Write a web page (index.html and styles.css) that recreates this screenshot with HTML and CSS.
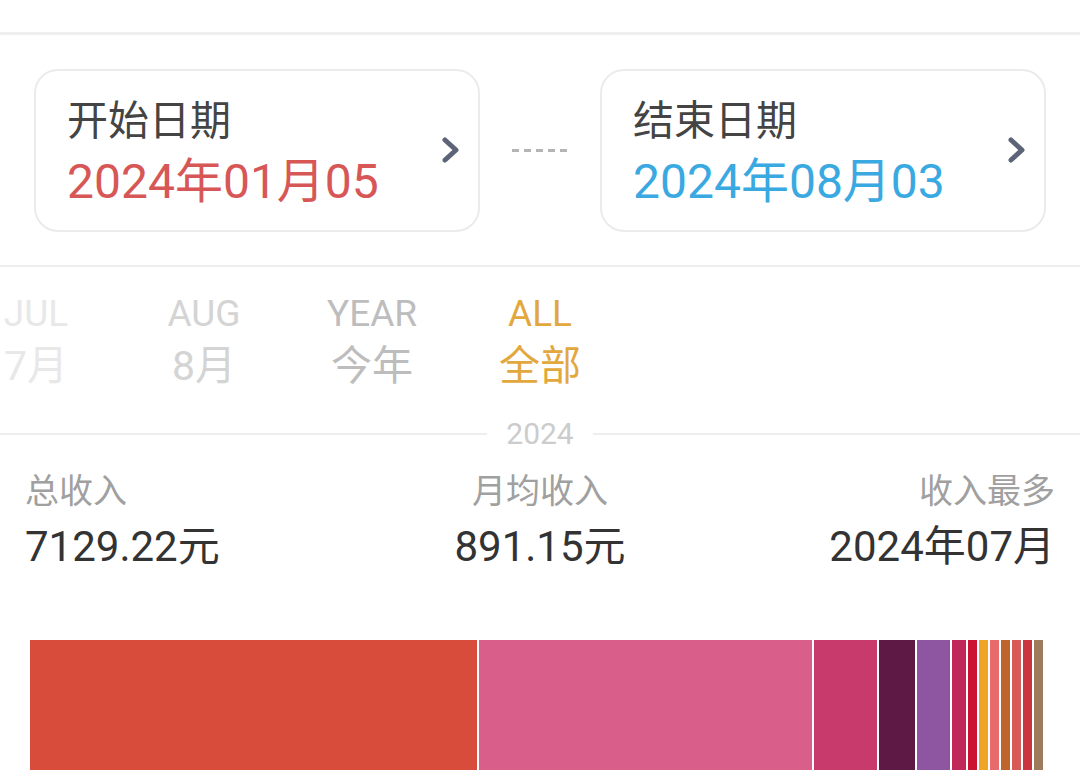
FILE: index.html
```html
<!DOCTYPE html>
<html lang="zh-CN">
<head>
  <meta charset="UTF-8" />
  <meta name="viewport" content="width=device-width, initial-scale=1.0"/>
  <title>收入统计</title>
  <link rel="stylesheet" href="styles.css">
</head>
<body>
  <div class="topbar"></div>

  <section class="range">
    <div class="date-card">
      <div class="date-text">
        <div class="date-label">开始日期</div>
        <div class="date-value start">2024年01月05</div>
      </div>
      <svg class="chev" width="20" height="26" viewBox="0 0 20 26">
        <polyline points="4,3 15,13 4,23" />
      </svg>
    </div>

    <div class="dashes"></div>

    <div class="date-card">
      <div class="date-text">
        <div class="date-label">结束日期</div>
        <div class="date-value end">2024年08月03</div>
      </div>
      <svg class="chev" width="20" height="26" viewBox="0 0 20 26">
        <polyline points="4,3 15,13 4,23" />
      </svg>
    </div>
  </section>

  <nav class="periods">
    <div class="period far"><span class="en">JUL</span><span class="zh">7月</span></div>
    <div class="period near"><span class="en">AUG</span><span class="zh">8月</span></div>
    <div class="period next"><span class="en">YEAR</span><span class="zh">今年</span></div>
    <div class="period active"><span class="en">ALL</span><span class="zh">全部</span></div>
  </nav>

  <div class="year-sep"><span>2024</span></div>

  <section class="stats">
    <div class="stat">
      <div class="stat-label">总收入</div>
      <div class="stat-value">7129.22元</div>
    </div>
    <div class="stat center">
      <div class="stat-label">月均收入</div>
      <div class="stat-value">891.15元</div>
    </div>
    <div class="stat right">
      <div class="stat-label">收入最多</div>
      <div class="stat-value">2024年07月</div>
    </div>
  </section>

  <div class="bar">
    <div class="seg" style="width:447px;background:#d84c3c"></div>
    <div class="seg" style="width:333px;background:#d95e8a"></div>
    <div class="seg" style="width:63px;background:#c83a6c"></div>
    <div class="seg" style="width:36px;background:#5e1a45"></div>
    <div class="seg" style="width:33px;background:#8e56a0"></div>
    <div class="seg" style="width:14px;background:#c0285a"></div>
    <div class="seg" style="width:9px;background:#cc1232"></div>
    <div class="seg" style="width:9px;background:#f0a424"></div>
    <div class="seg" style="width:9px;background:#e86a6a"></div>
    <div class="seg" style="width:9px;background:#c0642e"></div>
    <div class="seg" style="width:9px;background:#d85a56"></div>
    <div class="seg" style="width:9px;background:#c9343e"></div>
    <div class="seg" style="width:9px;background:#9c7c5c"></div>
  </div>
</body>
</html>
```

FILE: styles.css
```css
body {
  margin: 0;
  background: #fff;
  color: #333;
  font-family: Roboto, "Noto Sans CJK SC", sans-serif;
  overflow: hidden;
}
.topbar {
  height: 32px;
  border-bottom: 3px solid #eeeeee;
}

/* date range */
.range {
  display: flex;
  justify-content: space-between;
  align-items: center;
  height: 230px;
  padding: 0 34px;
  border-bottom: 2px solid #eeeeee;
}
.date-card {
  box-sizing: border-box;
  width: 446px;
  height: 163px;
  border: 2px solid #ebebeb;
  border-radius: 24px;
  padding: 0 17px 0 31px;
  display: flex;
  align-items: center;
  justify-content: space-between;
}
.date-text {
  padding-top: 6px;
}
.date-label {
  font-size: 41px;
  line-height: 48px;
  color: #444;
}
.date-value {
  font-size: 48px;
  line-height: 56px;
  margin-top: 9px;
}
.date-value.start {
  color: #d75757;
}
.date-value.end {
  color: #3aa9e2;
}
.chev polyline {
  fill: none;
  stroke: #5d6477;
  stroke-width: 5;
  stroke-linecap: round;
  stroke-linejoin: round;
}
.dashes {
  width: 56px;
  height: 3px;
  background: repeating-linear-gradient(90deg, #b4b4b4 0 7px, transparent 7px 12px);
}

/* period picker */
.periods {
  display: flex;
  height: 127px;
  padding-top: 25px;
  margin-left: -48px;
}
.period {
  width: 168px;
  flex: none;
  display: flex;
  flex-direction: column;
  align-items: center;
}
.period .en {
  font-size: 37px;
  line-height: 44px;
}
.period .zh {
  font-size: 41px;
  line-height: 48px;
  margin-top: 6px;
}
.period.far {
  color: #e8e8e8;
}
.period.near {
  color: #d4d4d4;
}
.period.next {
  color: #bdbdbd;
}
.period.active {
  color: #e2a83e;
}

.year-sep {
  display: flex;
  align-items: center;
  height: 30px;
}
.year-sep::before,
.year-sep::after {
  content: "";
  flex: 1;
  height: 2px;
  background: #eeeeee;
}
.year-sep span {
  padding: 0 19px;
  font-size: 30px;
  line-height: 30px;
  color: #cccccc;
}

/* summary */
.stats {
  display: flex;
  justify-content: space-between;
  padding: 22px 25px 0;
}
.stat {
  width: 330px;
}
.stat.center {
  text-align: center;
}
.stat.right {
  text-align: right;
}
.stat-label {
  font-size: 34px;
  line-height: 40px;
  color: #a0a0a0;
}
.stat-value {
  font-size: 42px;
  line-height: 50px;
  margin-top: 11px;
  color: #333;
}

.bar {
  display: flex;
  gap: 2px;
  height: 140px;
  margin: 68px 0 0 30px;
}
.seg {
  flex: none;
  height: 100%;
}
```
